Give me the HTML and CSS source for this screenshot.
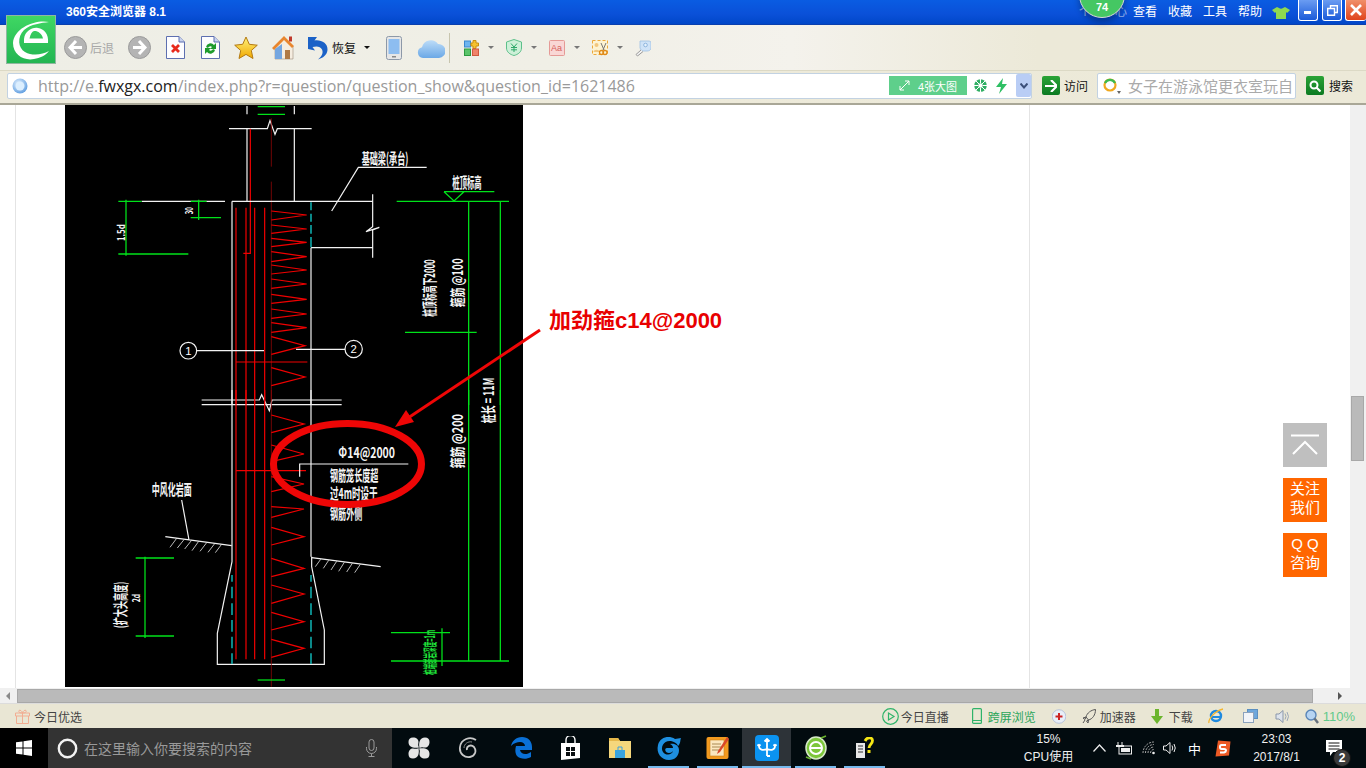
FILE: index.html
```html
<!DOCTYPE html>
<html lang="zh-CN">
<head>
<meta charset="utf-8">
<title>360安全浏览器 8.1</title>
<link rel="stylesheet" href="styles.css">
</head>
<body>
<div class="screen">

<header class="titlebar">
  <span class="title">360安全浏览器 8.1</span>
  <nav class="menu">
    <span class="menu-hidden">个人中心</span>
    <span class="ml6">查看</span><span class="ml11">收藏</span><span class="ml11">工具</span><span class="ml11">帮助</span>
    <svg class="shirt ml10" width="18" height="12" viewBox="0 0 18 12"><path d="M5 0 L7 1 Q9 2.500 11 1 L13 0 L18 3 L15 6 L14 5 L14 12 L4 12 L4 5 L3 6 L0 3 Z" fill="#8fd94f"/></svg>
    <span class="winbtn ml8"><svg width="8" height="8" viewBox="0 0 8 8"><rect x="0" y="5" width="7" height="3" fill="#fff"/></svg></span>
    <span class="winbtn ml4"><svg width="11" height="11" viewBox="0 0 11 11"><path d="M3.500 3V.7H10.300V7.500H8M.7 3.500H7.500V10.300H.7Z" fill="none" stroke="#fff" stroke-width="1.400"/></svg></span>
    <span class="winbtn close ml3"><svg width="12" height="12" viewBox="0 0 12 12"><path d="M1 1L11 11M11 1L1 11" stroke="#fff" stroke-width="2.600"/></svg></span>
  </nav>
</header>

<div class="toolbar">
  <svg width="23" height="23" viewBox="0 0 23 23"><circle cx="11.500" cy="11.500" r="11" fill="#b4b4b4" stroke="#9a9a9a"/><path d="M12 5L6 11.500L12 18M6.500 11.500H18" fill="none" stroke="#fff" stroke-width="3"/></svg>
  <span class="tool-off ml3">后退</span>
  <svg class="ml14" width="23" height="23" viewBox="0 0 23 23"><circle cx="11.500" cy="11.500" r="11" fill="#b4b4b4" stroke="#9a9a9a"/><path d="M11 5L17 11.500L11 18M16.500 11.500H5" fill="none" stroke="#fff" stroke-width="3"/></svg>
  <svg class="ml15" width="19" height="23" viewBox="0 0 19 23"><path d="M.5.5H13L18.500 6V22.500H.5Z" fill="#fdfdff" stroke="#5d6fb0"/><path d="M13 .5V6H18.500" fill="#c8d2ee" stroke="#5d6fb0"/><path d="M6 9L13 16M13 9L6 16" stroke="#e8291c" stroke-width="2.800"/></svg>
  <svg class="ml16" width="19" height="23" viewBox="0 0 19 23"><path d="M.5.5H13L18.500 6V22.500H.5Z" fill="#fdfdff" stroke="#5d6fb0"/><path d="M13 .5V6H18.500" fill="#c8d2ee" stroke="#5d6fb0"/><path d="M5 11A4.500 4.500 0 0 1 13 9L15 7V13H9L11 11A2.500 2.500 0 0 0 7 12Z" fill="#1f9b2d"/><path d="M14 14A4.500 4.500 0 0 1 6 16L4 18V12H10L8 14A2.500 2.500 0 0 0 12 13Z" fill="#1f9b2d"/></svg>
  <svg class="ml14" width="24" height="24" viewBox="0 0 24 24"><defs><linearGradient id="gs" x1="0" y1="0" x2="0" y2="1"><stop offset="0" stop-color="#fff27a"/><stop offset="1" stop-color="#f0a800"/></linearGradient></defs><path d="M12 1L15.300 8.300L23.300 9.200L17.300 14.500L19 22.500L12 18.400L5 22.500L6.700 14.500L.7 9.200L8.700 8.300Z" fill="url(#gs)" stroke="#b37a12"/></svg>
  <svg class="ml13" width="24" height="25" viewBox="0 0 24 25"><path d="M4 11L13 4L22 11V24H4Z" fill="#f5ede0" stroke="#9a8a78" stroke-width=".6"/><path d="M1 13L13 1L23 11L21 13L13 5L3 15Z" fill="#e8862e"/><path d="M4 14L11 9V24H4Z" fill="#74a6e0"/><rect x="14" y="15" width="5" height="9" fill="#b07a45"/><rect x="18" y="1.500" width="3" height="5" fill="#c0392b"/></svg>
  <svg class="ml12" width="22" height="24" viewBox="0 0 22 24"><path d="M1 1L10 1L7.500 4.500C14 3.500 21 7 20.500 14C20 19 16 22 11 23.500C15 20 16.500 17 15 13.500C13.500 10.500 10 9.800 5.500 11L8 14.500L1 13Z" fill="#1b62c7"/></svg>
  <span class="tool-text ml3">恢复</span>
  <i class="caret dark ml8"></i>
  <svg class="ml16" width="16" height="24" viewBox="0 0 16 24"><rect x=".5" y=".5" width="15" height="23" rx="2" fill="#e6e6e6" stroke="#8c98a8"/><rect x="2.500" y="3" width="11" height="15" fill="#8dbdf0"/><rect x="6" y="20" width="4" height="1.500" fill="#888"/></svg>
  <svg class="ml15" width="28" height="20" viewBox="0 0 28 20"><defs><linearGradient id="gc" x1="0" y1="0" x2="0" y2="1"><stop offset="0" stop-color="#bcdcf8"/><stop offset="1" stop-color="#6ba8e6"/></linearGradient></defs><path d="M6 20A5.500 5.500 0 0 1 5 9.200A9 9 0 0 1 21 6A7 7 0 0 1 22 20Z" fill="url(#gc)"/></svg>
  <i class="vsep ml4"></i>
  <svg class="ml14" width="15" height="16" viewBox="0 0 15 16"><rect x=".5" y="1" width="6" height="6" fill="#6eb5f0" stroke="#3a87cf"/><path d="M9 .5H12V3H14.500V6H12V8.500H9V6H7V3H9Z" fill="#f6c12e" stroke="#c98f10"/><rect x=".5" y="9" width="6" height="6.500" fill="#5bc46a" stroke="#2d9a40"/><rect x="8.500" y="9" width="6" height="6.500" fill="#f0836a" stroke="#cf5a40"/></svg>
  <i class="caret ml9"></i>
  <svg class="ml12" width="16" height="17" viewBox="0 0 16 17"><path d="M8 .5L15.500 3V9C15.500 13 12 15.500 8 16.500C4 15.500 .5 13 .5 9V3Z" fill="#cdf0d8" stroke="#5dc08a"/><path d="M5 4.500L8 8L11 4.500M8 8V13M5 8.500H11M5 10.800H11" fill="none" stroke="#2ea86a"/></svg>
  <i class="caret ml9"></i>
  <svg class="ml12" width="16" height="16" viewBox="0 0 16 16"><rect x=".5" y=".5" width="15" height="15" rx="1" fill="#f9d7d5" stroke="#e59a96"/><text class="mini" x="2" y="11">Aa</text></svg>
  <i class="caret ml9"></i>
  <svg class="ml12" width="16" height="16" viewBox="0 0 16 16"><rect x=".5" y=".5" width="15" height="14" fill="#fdf3d2" stroke="#eda93a" stroke-dasharray="3 2"/><circle cx="4.500" cy="5" r="2" fill="#f2c77e"/><path d="M1.500 12C1.500 9 7.500 9 7.500 12Z" fill="#f2c77e"/><path d="M9 3L12 10M14 3L11 10" stroke="#777"/><circle cx="9.500" cy="12.500" r="2" fill="none" stroke="#e08a18" stroke-width="1.300"/><circle cx="13" cy="12.500" r="2" fill="none" stroke="#e08a18" stroke-width="1.300"/></svg>
  <i class="caret ml9"></i>
  <svg class="ml12" width="16" height="18" viewBox="0 0 16 18"><path d="M5 2H14A2 2 0 0 1 16 4V9C16 11 14 12 12 12H8A4 4 0 0 1 5 9Z" fill="#cfe3f7" stroke="#9fc0e2" stroke-width=".8"/><circle cx="10.500" cy="6" r="1.800" fill="#e8f3fc" stroke="#7ba7d6" stroke-width=".8"/><path d="M6 11L1 15.500L2.500 17L8 12.500" fill="#f2f2f2" stroke="#999"/></svg>
</div>

<div class="addressbar">
  <div class="urlbox">
    <svg class="ml4" width="16" height="16" viewBox="0 0 16 16"><defs><radialGradient id="gg" cx=".4" cy=".35" r=".7"><stop offset="0" stop-color="#e8f4ff"/><stop offset="1" stop-color="#5b9be0"/></radialGradient></defs><circle cx="8" cy="8" r="7.500" fill="url(#gg)"/><circle cx="8" cy="8" r="4.500" fill="#dcefff"/></svg>
    <span class="url">http://e.<b>fwxgx.com</b>/index.php?r=question/question_show&amp;question_id=1621486</span>
    <span class="bigpic"><svg width="11" height="11" viewBox="0 0 11 11"><path d="M1 10L10 1M6 1H10V5M1 6V10H5" fill="none" stroke="#fff"/></svg>4张大图</span>
    <svg class="ml7" width="13" height="13" viewBox="0 0 13 13"><circle cx="6.500" cy="6.500" r="6.300" fill="#2fae63"/><circle cx="6.500" cy="6.500" r="2.200" fill="#fff"/><path d="M6.500 0V4M13 6.500H9M6.500 13V9M0 6.500H4M2 2L5 5M11 2L8 5M11 11L8 8M2 11L5 8" stroke="#fff"/></svg>
    <svg class="ml9" width="11" height="16" viewBox="0 0 11 16"><path d="M7 0L0 9H5L3 16L11 6H6Z" fill="#2fbf64"/></svg>
    <span class="urldrop"><svg width="8" height="6" viewBox="0 0 8 6"><path d="M.5.500L4 4.500L7.500.500" fill="none" stroke="#3b4f7a" stroke-width="2"/></svg></span>
  </div>
  <span class="gobtn ml10"><svg width="12" height="12" viewBox="0 0 12 12"><path d="M6 0L12 6L6 12M0 6H11" fill="none" stroke="#fff" stroke-width="2.200"/></svg></span>
  <span class="tool-text ml4">访问</span>
  <div class="searchbox">
    <svg width="18" height="18" viewBox="0 0 18 18"><circle cx="7" cy="8" r="5.500" fill="none" stroke="#f0a81e" stroke-width="2.200"/><path d="M2 6A5.500 5.500 0 0 1 12 6" fill="none" stroke="#3dbb4f" stroke-width="2.200"/><path d="M14 14H18L16 17Z" fill="#666"/></svg>
    <span class="hint">女子在游泳馆更衣室玩自</span>
  </div>
  <span class="gobtn ml10"><svg width="12" height="12" viewBox="0 0 12 12"><circle cx="5" cy="5" r="3.500" fill="none" stroke="#fff" stroke-width="2"/><path d="M7.500 7.500L11.500 11.500" stroke="#fff" stroke-width="2.200"/></svg></span>
  <span class="tool-text ml5">搜索</span>
</div>

<main class="viewport">
  <div class="page">
    <div class="sheet">
      <svg class="drawing" width="1013" height="583" viewBox="16 105 1013 583">
        <rect x="65" y="105" width="458" height="582" fill="#000"/>

        <g transform="translate(60 105) scale(.33333)">
          <path class="w" d="M561 3V28M703 3V28M561 71V289M703 71V289"/>
          <path class="g" d="M593 5H675M593 28H675"/>
          <path class="w" d="M507 71H622L630 47L645 88L652 71H755"/>
          <path class="r" d="M571 71V445H550"/>
          <path class="dr" d="M634 40V185M634 230V890"/>
          <path class="w" d="M245 289H495M516 289H938M938 268V365L918 380L958 367L938 375V458M753 428H938M516 289V900M753 428V900"/>
          <path class="g" d="M175 289H245M392 289H440M198 284V452M175 447H385M416 284V345M392 338H483"/>
          <path class="t" d="M753 292V316M753 326V350M753 360V386M753 396V427"/>
          <path class="r" d="M528 308V900M558 308V900M584 308V900M614 308V900"/>
          <path class="r" d="M634 318L740 330L634 345M634 360L740 372L634 385M634 400L740 412L634 425M634 440L740 455L634 470M634 480L740 495L634 507M634 522L740 537L634 550M634 568L740 583L634 595M634 612L740 627L634 640M634 653L740 668L634 682M634 695L735 722L634 748M634 788L735 816L634 842"/>
          <path class="r" d="M528 771H742"/>
          <path class="w" d="M815 318L895 187H1100"/>
          <circle class="w" cx="385" cy="737" r="25"/>
          <circle class="w" cx="881" cy="732" r="26"/>
          <path class="w" d="M410 737H612M708 733H855"/>
          <text class="lab" x="385" y="749">1</text>
          <text class="lab" x="881" y="744">2</text>
          <path class="g" d="M1152 260H1303M1152 260L1182 288L1212 260M1010 289H1347M1226 289V900M1321 289V900M1035 682H1250"/>
          <text class="cad" x="905" y="177" textLength="140" lengthAdjust="spacingAndGlyphs">基础梁(承台)</text>
          <text class="cad" x="1177" y="248" textLength="88" lengthAdjust="spacingAndGlyphs">桩顶标高</text>
          <text class="cad sm" transform="translate(398 328) rotate(-90)" textLength="21" lengthAdjust="spacingAndGlyphs">30</text>
          <text class="cad sm" transform="translate(194 408) rotate(-90)" textLength="50" lengthAdjust="spacingAndGlyphs">1.5d</text>
          <text class="cad" transform="translate(1125 635) rotate(-90)" textLength="172" lengthAdjust="spacingAndGlyphs">桩顶标高下2000</text>
          <text class="cad" transform="translate(1208 607) rotate(-90)" textLength="147" lengthAdjust="spacingAndGlyphs">箍筋 @100</text>
        </g>

        <g transform="translate(60 390) scale(.33333)">
          <path class="w" d="M425 30H598L605 14L628 62L636 30H845M425 44H845"/>
          <path class="w" d="M516 0V515L472 730V823H793V720L755 530V500M753 0V500"/>
          <path class="t" d="M516 555V575M516 590V625M516 640V675M516 690V725M516 740V775M516 790V822M753 555V575M753 590V625M753 640V675M753 690V725M753 740V775M753 790V822"/>
          <path class="r" d="M528 0V808M558 0V808M584 0V808M614 0V808"/>
          <path class="dr" d="M634 0V890"/>
          <path class="r" d="M634 75L732 102L634 128M634 165L732 192L634 215M634 260L732 282L634 305M634 350L732 357L634 382M634 412L732 440L634 465M634 505L732 535L634 560M634 585L732 612L634 640M634 667L732 695L634 720M634 748L732 775L634 802"/>
          <path class="r" d="M528 242H738"/>
          <path class="w" d="M1045 222H719V260"/>
          <path class="w" d="M365 330L387 450M316 440L515 467M755 503L962 530"/>
          <path class="wt" d="M330 472L350 445M352 474L372 449M374 477L394 452M396 482L416 454M420 484L440 458M444 487L464 461M466 488L484 464M766 530L782 508M790 535L806 511M813 540L830 514M836 544L853 517M860 546L877 520M884 548L901 523"/>
          <path class="g" d="M227 504H342M227 738H342M255 500V744M993 728H1170M993 813H1347M1146 715V828M1226 0V813M1321 0V813"/>
          <path class="g" d="M593 870H675"/>
          <text class="cad" x="835" y="205" textLength="170" lengthAdjust="spacingAndGlyphs">Φ14@2000</text>
          <text class="cad" x="810" y="272" textLength="145" lengthAdjust="spacingAndGlyphs">钢筋笼长度超</text>
          <text class="cad" x="810" y="326" textLength="143" lengthAdjust="spacingAndGlyphs">过4m时设于</text>
          <text class="cad" x="810" y="388" textLength="97" lengthAdjust="spacingAndGlyphs">钢筋外侧</text>
          <text class="cad" x="275" y="315" textLength="120" lengthAdjust="spacingAndGlyphs">中风化岩面</text>
          <text class="cad" transform="translate(198 715) rotate(-90)" textLength="140" lengthAdjust="spacingAndGlyphs">(扩大头高度)</text>
          <text class="cad sm" transform="translate(240 637) rotate(-90)" textLength="25" lengthAdjust="spacingAndGlyphs">2d</text>
          <text class="cad" transform="translate(1208 235) rotate(-90)" textLength="163" lengthAdjust="spacingAndGlyphs">箍筋 @200</text>
          <text class="cad" transform="translate(1303 100) rotate(-90)" textLength="137" lengthAdjust="spacingAndGlyphs">桩长 = 11M</text>
          <text class="cad green" transform="translate(1125 855) rotate(-90)" textLength="135" lengthAdjust="spacingAndGlyphs">桩端嵌岩深度=1m</text>
        </g>

        <ellipse class="ring" cx="347.500" cy="464" rx="74" ry="40.500"/>
        <path class="arrow" d="M540 330L405 420"/>
        <polygon class="head" points="395,427 406,410 414,422"/>
        <text class="note" x="549" y="328">加劲箍c14@2000</text>
      </svg>
    </div>

    <aside class="floats">
      <span class="float top"><svg width="30" height="22" viewBox="0 0 30 22"><path d="M1 1.500H29M3 20L15 8L27 20" fill="none" stroke="#fff" stroke-width="2"/></svg></span>
      <span class="float orange">关注<br>我们</span>
      <span class="float orange">Q Q<br>咨询</span>
    </aside>
  </div>
  <div class="vscroll"><i class="vthumb"></i></div>
</main>

<div class="hscroll">
  <i class="arrow-l"></i>
  <i class="hthumb"></i>
  <i class="arrow-r"></i>
</div>

<footer class="statusbar">
  <div class="status-left">
    <svg width="15" height="15" viewBox="0 0 15 15"><path d="M.5 4H14.500V7H.5ZM1.500 7V14.500H13.500V7M7.500 4V14.500M7.500 4C5 4 3 3 4 1.500C5 .5 7 2 7.500 4C8 2 10 .5 11 1.500C12 3 10 4 7.500 4Z" fill="none" stroke="#f2ad92"/></svg>
    <span class="ml4">今日优选</span>
  </div>
  <div class="status-right">
    <svg width="17" height="17" viewBox="0 0 17 17"><circle cx="8.500" cy="8.500" r="7.800" fill="none" stroke="#2fb36a" stroke-width="1.200"/><path d="M6.500 5V12L12 8.500Z" fill="none" stroke="#2fb36a" stroke-width="1.200"/></svg>
    <span class="ml2">今日直播</span>
    <svg class="ml23" width="10" height="16" viewBox="0 0 10 16"><rect x=".6" y=".6" width="8.800" height="14.800" rx="1" fill="none" stroke="#2fb36a" stroke-width="1.200"/><path d="M.6 12.500H9.400" stroke="#2fb36a"/></svg>
    <span class="ml6 st-green">跨屏浏览</span>
    <svg class="ml16" width="14" height="15" viewBox="0 0 14 15"><circle cx="7" cy="7.500" r="6.800" fill="#e8eef8" stroke="#b8c4da"/><path d="M7 4V11M3.500 7.500H10.500" stroke="#c22" stroke-width="2"/></svg>
    <svg class="ml16" width="14" height="15" viewBox="0 0 14 15"><path d="M13.500.5C9 1 5 4 4 8L6.500 11C10.500 10 13.500 6 13.500.5ZM4 8L1 9L3 10.500ZM6.500 11L6 14L4.500 12ZM3 11L1 14" fill="none" stroke="#555"/></svg>
    <span class="ml4">加速器</span>
    <svg class="ml15" width="12" height="15" viewBox="0 0 12 15"><path d="M4 0H8V7H12L6 15L0 7H4Z" fill="#6cb52d"/></svg>
    <span class="ml6">下载</span>
    <svg class="ml15" width="16" height="16" viewBox="0 0 16 16"><circle cx="8" cy="8" r="5" fill="none" stroke="#1f8ae0" stroke-width="2.400"/><path d="M3 9H13" stroke="#1f8ae0" stroke-width="2"/><path d="M1 15C0 12 6 3 15 1" fill="none" stroke="#f5b52e" stroke-width="1.300"/></svg>
    <svg class="ml19" width="15" height="14" viewBox="0 0 15 14"><rect x="4.500" y=".5" width="10" height="9" fill="#6ea7dc" stroke="#5c8fc0"/><rect x=".5" y="3.500" width="10" height="10" fill="#f2f4f8" stroke="#8ba2bd"/></svg>
    <svg class="ml17" width="15" height="15" viewBox="0 0 15 15"><path d="M1 5H4L8 1.500V13.500L4 10H1Z" fill="#dde3ec" stroke="#8a97aa"/><path d="M10 4.500Q12 7.500 10 10.500M12 3Q15 7.500 12 12" fill="none" stroke="#9aa6b8"/></svg>
    <svg class="ml15" width="14" height="15" viewBox="0 0 14 15"><circle cx="6" cy="6" r="5" fill="#b6d4f2" stroke="#5a86b8" stroke-width="1.400"/><path d="M9.500 9.500L13 14" stroke="#66707c" stroke-width="2.400"/></svg>
    <span class="ml4 st-zoom">110%</span>
  </div>
</footer>

<div class="taskbar">
  <div class="start"><svg width="16" height="16" viewBox="0 0 16 16"><path d="M0 2.300L6.500 1.400V7.500H0ZM7.500 1.200L16 0V7.500H7.500ZM0 8.500H6.500V14.600L0 13.700ZM7.500 8.500H16V16L7.500 14.800Z" fill="#fff"/></svg></div>
  <div class="cortana">
    <svg width="21" height="21" viewBox="0 0 21 21"><circle cx="10.500" cy="10.500" r="8.700" fill="none" stroke="#f2f2f2" stroke-width="2.400"/></svg>
    <span class="cortana-text">在这里输入你要搜索的内容</span>
    <svg class="mic" width="11" height="18" viewBox="0 0 11 18"><rect x="3" y=".5" width="5" height="11" rx="2.500" fill="none" stroke="#9a9a9a"/><path d="M.5 8V9.500A5 5 0 0 0 10.500 9.500V8M5.500 14.500V17.500M2.500 17.500H8.500" fill="none" stroke="#9a9a9a"/></svg>
  </div>
  <span class="task first"><svg width="22" height="22" viewBox="0 0 22 22"><g fill="#e6e6e6"><path id="petal" d="M11 10.500C6 11.500 .5 10.500 .5 5C.5 2 2 .5 5 .5C8.500 .5 10.500 2.500 10.500 5C10.500 7 9.500 8 11 10.500Z"/><path d="M11.500 11C10.500 6 11.500 .5 17 .5C20 .5 21.500 2 21.500 5C21.500 8.500 19.500 10.500 17 10.500C15 10.500 14 9.500 11.500 11Z"/><path d="M11 11.500C16 10.500 21.500 11.500 21.500 17C21.500 20 20 21.500 17 21.500C13.500 21.500 11.500 19.500 11.500 17C11.500 15 12.500 14 11 11.500Z"/><path d="M10.500 11C11.500 16 10.500 21.500 5 21.500C2 21.500 .5 20 .5 17C.5 13.500 2.500 11.500 5 11.500C7 11.500 8 12.500 10.500 11Z"/></g></svg></span>
  <span class="task"><svg width="20" height="22" viewBox="0 0 20 22"><path d="M18 3C12 -1 3 2 2 10C1 17 7 21 12 20C17 19 19 14 16 10C13 7 8 9 9 13" fill="none" stroke="#c8c8c8" stroke-width="1.800"/><path d="M14 5C10 4 6 7 6 11" fill="none" stroke="#8a8a8a"/></svg></span>
  <span class="task ml5"><svg width="21" height="22" viewBox="0 0 21 22"><path d="M11 0C5 0 1 4 0 9C3 6 6 5 9 5C12 5 14 7 14 9H5C4 13 4 16 6 19C9 22 15 23 20 20V15C16 18 10 18 9 13H21V10C21 4 17 0 11 0Z" fill="#0a70d6"/></svg></span>
  <span class="task"><svg width="21" height="24" viewBox="0 0 21 24"><path d="M1 7H20V22L1 24Z" fill="#fff"/><path d="M6 7V4A4.500 4.500 0 0 1 15 4V7" fill="none" stroke="#fff" stroke-width="1.400"/><path d="M6 11H10V15H6ZM11 11H15V15H11ZM6 16H10V20H6ZM11 16H15V20H11Z" fill="#0a0f12"/></svg></span>
  <span class="task"><svg width="22" height="20" viewBox="0 0 22 20"><path d="M0 0H9L11 3H22V20H0Z" fill="#f5d77c"/><path d="M0 0H9L11 3H0Z" fill="#e6b84a"/><path d="M6 12H16V20H6Z" fill="#3aa3df"/><path d="M9 12V9H13V12" fill="none" stroke="#3aa3df"/></svg></span>
  <span class="task run"><svg width="25" height="26" viewBox="0 0 25 26"><path d="M25 3L19 4C13 0 4 2 2 10C0 18 5 25 13 25C19 25 23 21 23 15C23 11 19 8 14 9C16 10 17 11 17 13H11C8 13 9 18 13 18C15 18 16 17 17 16C16 20 10 21 7 17C4 12 8 5 15 6C18 7 21 8 22 11C25 8 24 5 25 3Z" fill="#1e8fe0"/></svg></span>
  <span class="task run"><svg width="23" height="24" viewBox="0 0 23 24"><rect x=".5" y="1" width="22" height="22" rx="2" fill="#f29a1f"/><rect x="4" y="4" width="14" height="16" fill="#fbe8c0" stroke="#c98018" stroke-width=".6"/><path d="M6 8H15M6 11H15M6 14H13" stroke="#a98a55"/><path d="M21 1L12 15L11 18L14 16L23 3Z" fill="#d8482a"/></svg></span>
  <span class="task run active"><svg width="24" height="26" viewBox="0 0 24 26"><rect width="24" height="26" rx="4" fill="#0b93f0"/><path d="M12 4V21M9.500 6.500L12 4L14.500 6.500M4 11C4 15 8 15.500 12 14C16 15.500 20 15 20 11M5.500 9.500L4 11L2.500 9.500M18.500 9.500L20 11L21.500 9.500M12 21H15" fill="none" stroke="#fff" stroke-width="1.800"/></svg></span>
  <span class="task run"><svg width="22" height="26" viewBox="0 0 22 26"><ellipse cx="11" cy="13" rx="10" ry="11" fill="#7cc63a" stroke="#d6e8c8" stroke-width="1.500"/><circle cx="11" cy="13" r="6" fill="none" stroke="#fff" stroke-width="2"/><path d="M6 13H17" stroke="#fff" stroke-width="2"/><path d="M16 3L21 1M1 22L6 24" stroke="#6bb52f" stroke-width="1.600"/></svg></span>
  <span class="task run"><svg width="18" height="22" viewBox="0 0 18 22"><rect y="6" width="9" height="15" fill="#e8e8e8"/><path d="M2 9H7M2 12H7M2 15H7" stroke="#333"/><path d="M9 4Q11 0 15 1Q18 3 15 7Q13 9 13 11" fill="none" stroke="#f5e614" stroke-width="2.800"/><rect x="11.500" y="13" width="3" height="3" fill="#f5e614"/></svg></span>
  <div class="cpu"><span>15%</span><span>CPU使用</span></div>
  <svg class="ml20" width="13" height="8" viewBox="0 0 13 8"><path d="M.5 7.500L6.500 1L12.500 7.500" fill="none" stroke="#eee" stroke-width="1.200"/></svg>
  <svg class="ml9" width="17" height="14" viewBox="0 0 17 14"><path d="M3 1V4M7 1V4" stroke="#eee"/><rect x="1" y="4" width="8" height="2" fill="#eee"/><rect x="4" y="5" width="12.500" height="8" fill="none" stroke="#eee"/><rect x="6" y="7" width="9" height="4" fill="#eee"/></svg>
  <svg class="ml10" width="13" height="14" viewBox="0 0 13 14"><path d="M1 12A11 11 0 0 1 12 1M3.500 12A8.500 8.500 0 0 1 12 3.500M6 12A6 6 0 0 1 12 6M8.500 12A3.500 3.500 0 0 1 12 8.500" fill="none" stroke="#aaa" stroke-dasharray="2 1"/><circle cx="11.500" cy="12" r="1.300" fill="#eee"/></svg>
  <svg class="ml8" width="14" height="14" viewBox="0 0 14 14"><path d="M.5 5H3L7 1.500V12.500L3 9H.5Z" fill="none" stroke="#eee"/><path d="M9 4.500Q10.500 7 9 9.500M11 3Q13.500 7 11 11" fill="none" stroke="#eee"/></svg>
  <span class="ime ml11">中</span>
  <svg class="ml14" width="16" height="17" viewBox="0 0 16 17"><path d="M3 .5L15.500 1.500L14 15.500L.5 16.500Z" fill="#ee5a24"/><path d="M11 5H6.500Q5 5 5 7T6.500 9H9Q11 9 11 10.500T9 12.500H5" fill="none" stroke="#fff" stroke-width="2"/></svg>
  <div class="clock"><span>23:03</span><span>2017/8/1</span></div>
  <span class="notify ml24">
    <svg width="16" height="17" viewBox="0 0 16 17"><path d="M0 0H16V12H7L4 16V12H0Z" fill="#fff"/><path d="M2.500 3H13.500M2.500 6H13.500M2.500 9H13.500" stroke="#111"/></svg>
    <b class="notify-badge">2</b>
  </span>
</div>

<div class="logo">
  <svg width="48" height="48" viewBox="0 0 48 48"><path d="M42 6C30 3 7 11 6 27C6 39 17 45 27 43C33 42 38 40 42 35C35 39 25 40 18 36C11 32 10 21 17 14C24 8 34 7 42 6Z" fill="#fff"/><path fill-rule="evenodd" d="M17 23C18 15 25 11 31 12C37 13 42 18 41 27H17ZM22.500 22.500H36C35 17 30 14.500 27 15C25 15.500 23.500 18 22.500 22.500Z" fill="#fff"/></svg>
</div>
<div class="badge"><span>74</span></div>

</div>
</body>
</html>
```

FILE: styles.css
```css
* { box-sizing: border-box; }
html, body { margin: 0; padding: 0; }
body {
  font-family: "Liberation Sans", "Noto Sans CJK SC", sans-serif;
  font-size: 12px;
  overflow: hidden;
}
svg { display: block; flex: none; }
i { display: block; flex: none; }

.screen {
  position: relative;
  width: 1366px;
  height: 768px;
  display: flex;
  flex-direction: column;
  overflow: hidden;
  background: #fff;
}

.ml2 { margin-left: 2px; }
.ml3 { margin-left: 3px; }
.ml4 { margin-left: 4px; }
.ml5 { margin-left: 5px; }
.ml6 { margin-left: 6px; }
.ml7 { margin-left: 7px; }
.ml8 { margin-left: 8px; }
.ml9 { margin-left: 9px; }
.ml10 { margin-left: 10px; }
.ml11 { margin-left: 11px; }
.ml12 { margin-left: 12px; }
.ml13 { margin-left: 13px; }
.ml14 { margin-left: 14px; }
.ml15 { margin-left: 15px; }
.ml16 { margin-left: 16px; }
.ml17 { margin-left: 17px; }
.ml19 { margin-left: 19px; }
.ml20 { margin-left: 20px; }
.ml23 { margin-left: 23px; }
.ml24 { margin-left: 24px; }

/* Title bar */
.titlebar {
  height: 25px;
  flex: none;
  display: flex;
  justify-content: space-between;
  padding-left: 66px;
  background: linear-gradient(#0a5ce2, #0a50d8 60%, #0047c8);
  border-bottom: 1px solid #0a3fae;
  color: #fff;
}
.title { font-weight: bold; line-height: 24px; }
.menu { display: flex; align-items: flex-start; line-height: 24px; }
.menu-hidden { opacity: .55; }
.shirt { margin-top: 7px; }
.winbtn {
  width: 20px;
  height: 21px;
  display: flex;
  align-items: center;
  justify-content: center;
  background: linear-gradient(#6a9cf2, #1c5bd8);
  border: 1px solid #fff;
  border-top: 0;
  border-radius: 0 0 3px 3px;
}
.winbtn.close {
  width: 21px;
  background: linear-gradient(#f0906a, #e0441c);
  border-right: 0;
}

/* Tool bar */
.toolbar {
  height: 45px;
  flex: none;
  display: flex;
  align-items: center;
  padding-left: 64px;
  background: linear-gradient(90deg, #eeeee6 0, #f0efe6 40%, #f4f2ec 58%, #ece9d8 76%, #ece9d9 100%);
}
.tool-off { color: #a8a8a8; }
.tool-text { color: #111; }
.caret {
  width: 0;
  height: 0;
  border: 3px solid transparent;
  border-top: 3px solid #777;
  border-bottom: 0;
}
.caret.dark { border-top-color: #111; }
.vsep { width: 1px; height: 30px; background: #c8c5ae; }
.mini { font-family: "Liberation Sans", sans-serif; font-size: 9px; fill: #d7605a; }

/* Address bar */
.addressbar {
  height: 35px;
  flex: none;
  display: flex;
  align-items: center;
  padding: 0 0 3px 7px;
  background: linear-gradient(90deg, #eeebdc 0, #ece9d8 100%);
  border-top: 1px solid #dcd9c5;
  border-bottom: 2px solid #a9a797;
}
.urlbox {
  width: 1025px;
  height: 26px;
  display: flex;
  align-items: center;
  background: #fff;
  border: 1px solid #c2d2e2;
  border-radius: 2px;
}
.url {
  margin-left: 10px;
  flex: 1;
  font-family: "Open Sans", "Liberation Sans", sans-serif;
  font-size: 16px;
  color: #999;
  white-space: nowrap;
}
.url b { font-weight: normal; color: #222; }
.bigpic {
  width: 78px;
  height: 19px;
  display: flex;
  align-items: center;
  gap: 8px;
  padding-left: 10px;
  background: #5ecf8b;
  color: #fff;
  font-size: 11px;
}
.urldrop {
  width: 15px;
  height: 23px;
  margin: 0 0 0 9px;
  display: flex;
  align-items: center;
  justify-content: center;
  background: #b9cdf5;
  border-radius: 2px;
}
.gobtn {
  width: 18px;
  height: 19px;
  display: flex;
  align-items: center;
  justify-content: center;
  background: linear-gradient(#2aa336, #0c7a22);
  border-radius: 2px;
  flex: none;
}
.searchbox {
  width: 199px;
  height: 26px;
  margin-left: 9px;
  padding-left: 5px;
  display: flex;
  align-items: center;
  background: #fff;
  border: 1px solid #c2d2e2;
  border-radius: 2px;
}
.hint {
  margin-left: 7px;
  font-size: 15px;
  color: #aaa;
  white-space: nowrap;
  overflow: hidden;
  width: 166px;
}

/* Page area */
.viewport {
  height: 583px;
  flex: none;
  display: flex;
}
.page {
  position: relative;
  width: 1350px;
  background: #fff;
}
.sheet {
  width: 1015px;
  height: 100%;
  margin-left: 15px;
  border-left: 1px solid #e4e4e4;
  border-right: 1px solid #e4e4e4;
}
.w { fill: none; stroke: #f2f2f2; stroke-width: 3.6; }
.wt { fill: none; stroke: #e8e8e8; stroke-width: 2.4; }
.g { fill: none; stroke: #00e21a; stroke-width: 3.8; }
.r { fill: none; stroke: #f00000; stroke-width: 3.6; }
.dr { fill: none; stroke: #8c0808; stroke-width: 2.4; }
.t { fill: none; stroke: #0fb5b5; stroke-width: 4.5; }
.cad {
  font-family: "Noto Sans CJK SC", sans-serif;
  font-size: 45px;
  font-weight: bold;
  fill: #f5f5f5;
}
.cad.sm { font-size: 30px; }
.cad.green { fill: #1fe03a; font-size: 42px; }
.lab {
  font-family: "Liberation Sans", sans-serif;
  font-size: 34px;
  fill: #fff;
  text-anchor: middle;
}
.ring { fill: none; stroke: #ee0606; stroke-width: 7; }
.arrow { fill: none; stroke: #ee0606; stroke-width: 3; }
.head { fill: #ee0606; }
.note {
  font-family: "Liberation Sans", "Noto Sans CJK SC", sans-serif;
  font-size: 22px;
  font-weight: bold;
  fill: #e80000;
}
.floats {
  position: absolute;
  left: 1283px;
  top: 318px;
  display: flex;
  flex-direction: column;
  gap: 11px;
}
.float {
  width: 44px;
  height: 44px;
  display: flex;
  align-items: center;
  justify-content: center;
  text-align: center;
  font-size: 15px;
  line-height: 19px;
  color: #fff;
}
.float.top { background: #bfbfbf; }
.float.orange { background: #ff6600; padding-bottom: 5px; }
.vscroll {
  width: 16px;
  background: #f0f0f0;
  padding: 291px 2px 0 1px;
}
.vthumb { width: 13px; height: 65px; background: #bababa; border: 1px solid #a8a8a8; }

/* Horizontal scrollbar */
.hscroll {
  height: 16px;
  flex: none;
  display: flex;
  align-items: center;
  background: #f0f0f0;
  border-bottom: 1px solid #dcdcdc;
  padding-left: 6px;
}
.arrow-l {
  width: 0;
  height: 0;
  border: 4px solid transparent;
  border-right: 4px solid #8a8a8a;
  border-left: 0;
}
.arrow-r {
  width: 0;
  height: 0;
  margin-left: 25px;
  border: 4px solid transparent;
  border-left: 4px solid #555;
  border-right: 0;
}
.hthumb {
  width: 1296px;
  height: 14px;
  margin-left: 7px;
  background: #bababa;
  border: 1px solid #a8a8a8;
}

/* Status bar */
.statusbar {
  height: 24px;
  flex: none;
  display: flex;
  justify-content: space-between;
  align-items: center;
  padding: 0 11px 0 15px;
  background: #e9e6d4;
  color: #444;
}
.status-left, .status-right { display: flex; align-items: center; }
.st-green { color: #2ca55b; }
.st-zoom { color: #5fc98a; font-size: 13px; }

/* Task bar */
.taskbar {
  height: 40px;
  flex: none;
  display: flex;
  align-items: center;
  background: #020b0f;
  color: #f0f0f0;
}
.start {
  width: 48px;
  height: 40px;
  display: flex;
  align-items: center;
  justify-content: center;
  background: #000;
}
.cortana {
  width: 344px;
  height: 40px;
  display: flex;
  align-items: center;
  padding-left: 9px;
  background: #333;
}
.cortana-text { margin-left: 6px; font-size: 14px; color: #999; flex: 1; }
.mic { margin-right: 15px; }
.task {
  position: relative;
  width: 49px;
  height: 40px;
  flex: none;
  display: flex;
  align-items: center;
  justify-content: center;
}
.task.first { margin-left: 2px; }
.task.run::after {
  content: "";
  position: absolute;
  left: 4px;
  right: 4px;
  bottom: 0;
  height: 2px;
  background: #76b9ed;
}
.task.active { background: #2d3338; }
.task.active::after { left: 0; right: 0; }
.cpu {
  width: 49px;
  margin-left: 135px;
  display: flex;
  flex-direction: column;
  align-items: center;
  gap: 4px;
  line-height: 14px;
  white-space: nowrap;
}
.ime { font-size: 13px; color: #fff; }
.clock {
  width: 51px;
  margin-left: 20px;
  display: flex;
  flex-direction: column;
  align-items: center;
  gap: 4px;
  line-height: 14px;
  white-space: nowrap;
}
.notify { position: relative; display: block; }
.notify-badge {
  position: absolute;
  left: 7px;
  top: 9px;
  width: 18px;
  height: 18px;
  border-radius: 50%;
  background: #3a3a3a;
  border: 1px solid #111;
  color: #fff;
  font-size: 12px;
  line-height: 16px;
  text-align: center;
}

/* Floating logo and badge, laid over the title bar */
.logo {
  position: absolute;
  left: 6px;
  top: 15px;
  width: 50px;
  height: 49px;
  display: flex;
  align-items: center;
  justify-content: center;
  background: linear-gradient(#3fd763, #22b552);
  border: 1px solid #8fb7a0;
}
.badge {
  position: absolute;
  left: 1079px;
  top: -28px;
  width: 46px;
  height: 46px;
  display: flex;
  align-items: flex-end;
  justify-content: center;
  padding-bottom: 4px;
  border-radius: 50%;
  background: #45c763;
  border: 1px solid #d8d8d8;
  box-shadow: 0 4px 6px rgba(0, 0, 0, .3);
  color: #fff;
  font-size: 11px;
  font-weight: bold;
}
```
